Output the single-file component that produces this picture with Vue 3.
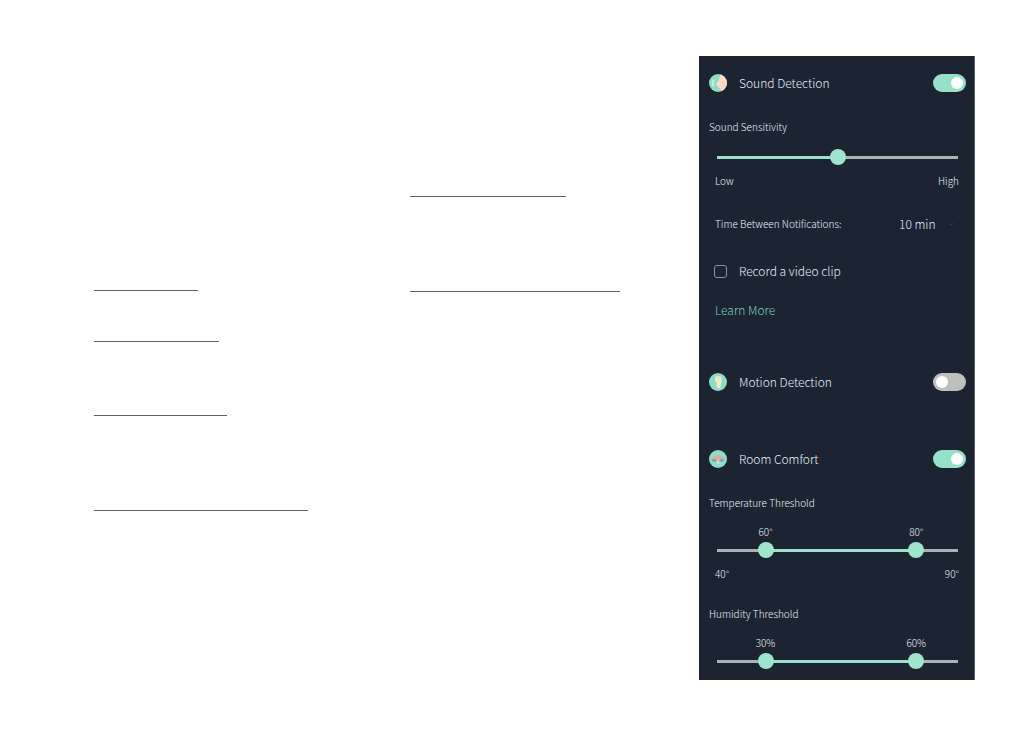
<script setup>
import { ref } from 'vue'

const rules = [
  [
    { width: 104, gap: 234 },
    { width: 125, gap: 50 },
    { width: 133, gap: 73 },
    { width: 214, gap: 94 },
  ],
  [
    { width: 156, gap: 140 },
    { width: 210, gap: 94 },
  ],
]

const soundOn = ref(true)
const motionOn = ref(false)
const comfortOn = ref(true)
const record = ref(false)
const interval = ref('10 min')
const sensitivity = ref(50)

const temperature = ref([
  { at: 18, text: '60°', name: 'Lowest temperature' },
  { at: 85, text: '80°', name: 'Highest temperature' },
])
const humidity = ref([
  { at: 18, text: '30%', name: 'Lowest humidity' },
  { at: 85, text: '60%', name: 'Highest humidity' },
])

const along = (at) => `calc(8px + (100% - 16px) * ${at / 100})`
const span = (pair) => ({ '--from': along(pair[0].at), '--to': along(pair[1].at) })
</script>

<template>
  <main class="page">
    <div v-for="(column, c) in rules" :key="c" class="column">
      <hr
        v-for="(line, i) in column"
        :key="i"
        class="rule"
        :style="{ width: line.width + 'px', marginTop: line.gap + 'px' }"
      />
    </div>

    <section class="panel">
      <div class="head">
        <svg class="icon" viewBox="0 0 18 18" aria-hidden="true">
          <defs><clipPath id="disc-a"><circle cx="9" cy="9" r="9" /></clipPath></defs>
          <g clip-path="url(#disc-a)">
            <rect width="18" height="18" fill="#8edbc7" />
            <path d="M11.500 0L18 1V18H12.500Q12.500 15.500 11 14.500Q7.500 12.500 7 9.500Q9.500 7 10.500 4Z" fill="#f9dcc9" />
            <path d="M4.500 5.500Q3 9 4.500 12.500" fill="none" stroke="#c3f1e6" stroke-width="2" />
            <path d="M13 8L14.500 8.500M14 12L15.500 11.500" fill="none" stroke="#e9b8a8" stroke-width="1" />
          </g>
        </svg>
        <label class="title" for="sound">Sound Detection</label>
        <input id="sound" v-model="soundOn" class="switch" type="checkbox" role="switch" />
      </div>

      <label class="small caption" for="level">Sound Sensitivity</label>
      <div class="slider single" :style="{ '--from': '0px', '--to': along(sensitivity) }">
        <input id="level" v-model.number="sensitivity" class="range" type="range" min="0" max="100" />
      </div>
      <div class="ends small"><span>Low</span><span>High</span></div>

      <div class="timing">
        <label class="small" for="interval">Time Between Notifications:</label>
        <span class="picker">
          <select id="interval" v-model="interval" class="select">
            <option>5 min</option>
            <option>10 min</option>
            <option>15 min</option>
          </select>
          <svg class="chevron" viewBox="0 0 8 8" aria-hidden="true">
            <path d="M1.500 3L4 5L6.500 3" fill="none" stroke="#303c49" stroke-width="1" />
          </svg>
        </span>
      </div>

      <div class="record">
        <input id="clip" v-model="record" class="tick" type="checkbox" />
        <label for="clip">Record a video clip</label>
      </div>

      <a class="more" href="#">Learn More</a>

      <div class="head spaced">
        <svg class="icon" viewBox="0 0 18 18" aria-hidden="true">
          <circle cx="9" cy="9" r="9" fill="#8edbc7" />
          <path d="M6 4Q9 2.500 12.200 3.500L12.500 8L11.500 14.500Q9.500 15.800 7.800 14.500L7.500 10L6 7Z" fill="#f2eccb" />
          <path d="M8.500 4.500V6M10.500 4V5.500" stroke="#d5dfbd" stroke-width="1" />
        </svg>
        <label class="title" for="motion">Motion Detection</label>
        <input id="motion" v-model="motionOn" class="switch" type="checkbox" role="switch" />
      </div>

      <div class="head spaced">
        <svg class="icon" viewBox="0 0 18 18" aria-hidden="true">
          <circle cx="9" cy="9" r="9" fill="#8edbc7" />
          <path d="M2.500 9H15.500Q15 12.500 11 11.500L9 9.500L7 11.500Q3 12.500 2.500 9Z" fill="#6fabab" />
          <path d="M3 7.500Q6 5.500 7.500 6.500L9 5L10.500 6.500Q12 5.500 15 7.500Q14 9.500 11 9.500L9 12L7 9.500Q4 9.500 3 7.500Z" fill="#e9a79c" />
          <path d="M9 8.500L10.500 13.500H7.500Z" fill="#e3e2d2" />
        </svg>
        <label class="title" for="comfort">Room Comfort</label>
        <input id="comfort" v-model="comfortOn" class="switch" type="checkbox" role="switch" />
      </div>

      <h3 class="small caption">Temperature Threshold</h3>
      <div class="marks small">
        <span v-for="t in temperature" :key="t.name" class="mark" :style="{ left: along(t.at) }">{{ t.text }}</span>
      </div>
      <div class="slider" :style="span(temperature)">
        <input v-for="t in temperature" :key="t.name" v-model.number="t.at" class="range" type="range" min="0" max="100" :aria-label="t.name" />
      </div>
      <div class="ends small"><span>40°</span><span>90°</span></div>

      <h3 class="small caption humidity">Humidity Threshold</h3>
      <div class="marks small">
        <span v-for="h in humidity" :key="h.name" class="mark" :style="{ left: along(h.at) }">{{ h.text }}</span>
      </div>
      <div class="slider" :style="span(humidity)">
        <input v-for="h in humidity" :key="h.name" v-model.number="h.at" class="range" type="range" min="0" max="100" :aria-label="h.name" />
      </div>
    </section>
  </main>
</template>

<style>
body {
  background: #fefefe;
}
</style>

<style scoped>
.page {
  display: grid;
  grid-template-columns: 316fr 289fr 276fr;
  align-items: start;
  padding: 56px 57px 56px 94px;
  font-family: "Noto Sans CJK SC", "Noto Sans", sans-serif;
}
.rule {
  height: 1px;
  margin: 0;
  border: 0;
  background: #636163;
}
.panel {
  display: flex;
  flex-direction: column;
  box-sizing: border-box;
  padding: 11px 8px 11px 10px;
  border-right: 1px solid #59616b;
  background: #1b2430;
  color: #e6eefb;
  font-size: 12px;
  font-weight: 300;
  line-height: 20px;
}
.head {
  display: flex;
  align-items: center;
  height: 32px;
}
.spaced {
  margin-top: 45px;
}
.icon {
  width: 18px;
  height: 18px;
}
.title {
  flex: 1;
  margin-left: 12px;
}
.switch {
  appearance: none;
  display: flex;
  align-items: center;
  box-sizing: border-box;
  width: 33px;
  height: 18px;
  margin: 0;
  padding: 0 3px;
  border-radius: 9px;
  background: #bfbfc0;
}
.switch::before {
  content: "";
  width: 12px;
  height: 12px;
  border-radius: 50%;
  background: #fff;
}
.switch:checked {
  justify-content: flex-end;
  background: #96dfc8;
}
.small {
  font-size: 10px;
  font-weight: 300;
  line-height: 16px;
}
.caption {
  margin: 20px 0 0;
}
.humidity {
  margin-top: 24px;
}
.slider {
  display: grid;
  align-items: center;
  height: 16px;
  margin: 2px 8px 0;
  background: linear-gradient(
      to right,
      #adb1b5 var(--from),
      #9be1cd var(--from),
      #9be1cd var(--to),
      #adb1b5 var(--to)
    )
    center / 100% 3px no-repeat;
}
.single {
  margin-top: 14px;
}
.range {
  appearance: none;
  grid-area: 1 / 1;
  width: 100%;
  min-width: 0;
  height: 16px;
  margin: 0;
  background: none;
  pointer-events: none;
}
.range::-webkit-slider-thumb {
  appearance: none;
  width: 16px;
  height: 16px;
  border-radius: 50%;
  background: #9fe4cf;
  pointer-events: auto;
}
.marks {
  position: relative;
  height: 16px;
  margin: 13px 8px 0;
}
.mark {
  position: absolute;
  transform: translateX(-50%);
}
.ends {
  display: flex;
  justify-content: space-between;
  margin: 8px 7px 0 6px;
}
.timing {
  display: flex;
  align-items: center;
  justify-content: space-between;
  height: 20px;
  margin: 25px 11px 0 6px;
}
.picker {
  display: flex;
  align-items: center;
  gap: 11px;
}
.select {
  appearance: none;
  padding: 0;
  border: 0;
  background: none;
  color: inherit;
  font: inherit;
}
.chevron {
  width: 8px;
  height: 8px;
}
.record {
  display: flex;
  align-items: center;
  gap: 12px;
  margin: 27px 0 0 5px;
}
.tick {
  appearance: none;
  box-sizing: border-box;
  width: 13px;
  height: 13px;
  margin: 0;
  border: 1px solid #8b919a;
  border-radius: 3px;
}
.tick:checked {
  background: #96dfc8;
}
.more {
  align-self: flex-start;
  margin: 19px 0 1px 6px;
  color: #74d3bd;
  text-decoration: none;
}
</style>
